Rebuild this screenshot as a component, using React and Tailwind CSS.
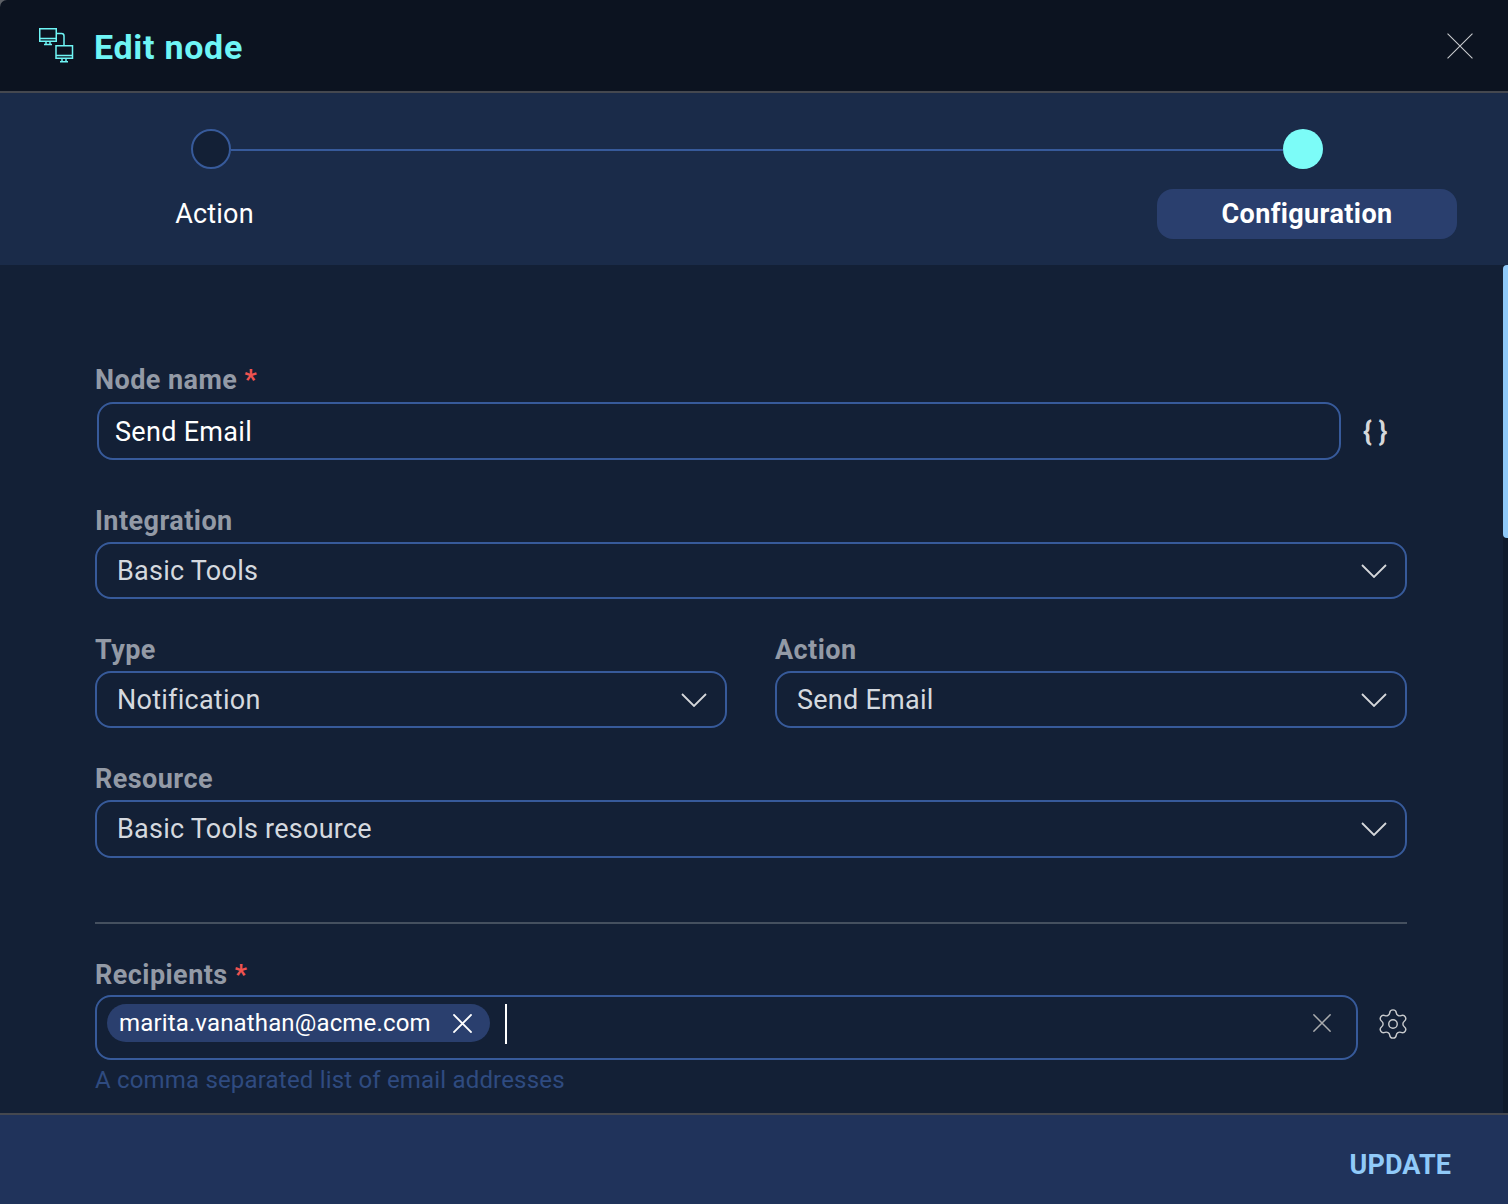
import React from 'react';
import { Settings } from 'lucide-react';

const CloseIcon = ({ className, strokeWidth = 1 }) => (
  <svg className={className} viewBox="0 0 24 24" fill="none" stroke="currentColor" strokeWidth={strokeWidth}>
    <path d="M0.5 0.5 L23.5 23.5 M23.5 0.5 L0.5 23.5" />
  </svg>
);

const ChevronIcon = () => (
  <svg className="h-[14px] w-[26px] text-[#d5d7da]" viewBox="0 0 26 14" fill="none" stroke="currentColor" strokeWidth="1.8">
    <path d="M1 1 L13 13 L25 1" />
  </svg>
);

// two monitors joined by a cable
const NodesIcon = () => (
  <svg className="h-[35px] w-[35px] text-[#6ff5f5]" viewBox="0 0 35 35" fill="none" stroke="currentColor" strokeWidth="1.5">
    <rect x="0.75" y="0.75" width="16.5" height="12.5" />
    <path d="M0.75 10.5 H17.25 M7 13 V16 M11 13 V16 M5 16.5 H13" />
    <rect x="17" y="17.75" width="16.5" height="12.5" />
    <path d="M17 27.5 H33.5 M23 30 V33.5 M27 30 V33.5 M21 33.75 H29" />
    <path d="M17.5 5.5 H22.5 Q25 5.5 25 8 V17.5" />
  </svg>
);

const Label = ({ children, required, className = 'mb-[6px]' }) => (
  <div className={`h-[30px] text-[27px] leading-[30px] font-bold tracking-[0.45px] text-[#939aa6] ${className}`}>
    {children}
    {required && <span className="ml-[7px] text-[#ef5350]">*</span>}
  </div>
);

const SelectBox = ({ value, height = 'h-[57px]' }) => (
  <div className={`flex ${height} items-center justify-between rounded-[16px] border-2 border-[#375a9a] pl-[20px] pr-[18px]`}>
    <span className="text-[27px] leading-[30px] tracking-[0.25px] text-[#d5d9df]">{value}</span>
    <ChevronIcon />
  </div>
);

export default function App() {
  return (
    <div className="flex h-[1204px] w-[1508px] flex-col overflow-hidden bg-[#5d6066] font-['Roboto',sans-serif]">
      {/* Header */}
      <header className="flex h-[93px] shrink-0 items-center justify-between rounded-tl-[7px] border-b-2 border-[#45484f] bg-[#0c1320] pl-[39px] pr-[35px]">
        <div className="flex items-center gap-[20px]">
          <NodesIcon />
          <h1 className="mt-[3px] text-[34px] font-bold tracking-[0.7px] text-[#6ff5f5]">Edit node</h1>
        </div>
        <CloseIcon className="h-[26px] w-[26px] text-[#c9cbce]" />
      </header>

      {/* Stepper */}
      <section className="h-[172px] shrink-0 bg-[#1a2b49] pt-[36px]">
        <div className="flex items-center pl-[191px] pr-[185px]">
          <div className="h-[40px] w-[40px] rounded-full border-2 border-[#375a9a] bg-[#132036]" />
          <div className="mt-[2px] h-[2px] flex-1 bg-[#375a9a]" />
          <div className="h-[40px] w-[40px] rounded-full bg-[#7cfcf8]" />
        </div>
        <div className="mt-[20px] flex justify-between pl-[64px] pr-[51px]">
          <div className="flex h-[50px] w-[300px] items-center justify-center pl-[1px] text-[27px] leading-[30px] tracking-[0.2px] text-white">Action</div>
          <div className="flex h-[50px] w-[300px] items-center justify-center rounded-[16px] bg-[#2a3f6e] text-[27px] leading-[30px] font-bold tracking-[0.4px] text-white">Configuration</div>
        </div>
      </section>

      {/* Form */}
      <main className="relative min-h-0 flex-1 overflow-hidden bg-[#132036] pl-[95px] pr-[101px] pt-[100px]">
        <div className="absolute right-0 top-0 h-full w-[5px] bg-[#0f1a2c]">
          <div className="h-[273px] w-[5px] rounded-l-[4px] bg-[#90caf9]" />
        </div>

        <Label required className="mb-[7px]">Node name</Label>
        <div className="flex items-center">
          <div className="ml-[2px] flex h-[58px] w-[1244px] shrink-0 items-center rounded-[16px] border-2 border-[#375a9a] pl-[16px] text-[27px] leading-[30px] tracking-[0.3px] text-white">
            <span className="mt-[2px]">Send Email</span>
          </div>
          <span className="ml-[22px] mt-[2px] text-[27px] font-bold text-[#d5d7da]">{'{ }'}</span>
        </div>

        <Label className="mb-[6px] mt-[46px]">Integration</Label>
        <SelectBox value="Basic Tools" />

        <div className="mt-[36px] grid grid-cols-2 gap-x-[48px]">
          <div>
            <Label>Type</Label>
            <SelectBox value="Notification" />
          </div>
          <div>
            <Label>Action</Label>
            <SelectBox value="Send Email" />
          </div>
        </div>

        <Label className="mb-[6px] mt-[36px]">Resource</Label>
        <SelectBox value="Basic Tools resource" height="h-[58px]" />

        <div className="mt-[64px] h-[2px] bg-[#45505f]" />

        <Label required className="mb-[5px] mt-[36px]">Recipients</Label>
        <div className="flex items-center">
          <div className="flex h-[65px] w-[1263px] shrink-0 items-center rounded-[16px] border-2 border-[#375a9a] pb-[9px] pl-[10px] pr-[25px]">
            <div className="flex h-[38px] w-[383px] items-center rounded-full bg-[#2a3f6e] pl-[12px] pr-[18px]">
              <span className="flex-1 text-[24px] tracking-[0.15px] text-white">marita.vanathan@acme.com</span>
              <CloseIcon className="h-[19px] w-[19px] text-white" strokeWidth={2.4} />
            </div>
            <div className="ml-[15px] mt-[2px] h-[40px] w-[2px] bg-white" />
            <CloseIcon className="ml-auto h-[18px] w-[18px] text-[#a9abae]" strokeWidth={2} />
          </div>
          <Settings className="mb-[8px] ml-[18px] h-[34px] w-[34px] shrink-0 text-[#c9cbce]" strokeWidth={1} />
        </div>
        <div className="mt-[6px] text-[24px] leading-[28px] tracking-[0.18px] text-[#2f4b80]">A comma separated list of email addresses</div>
      </main>

      {/* Footer */}
      <footer className="flex h-[91px] shrink-0 items-center justify-end border-t-2 border-[#45484f] bg-[#20335b] pr-[57px] pt-[11px]">
        <button className="text-[27px] font-bold tracking-[0.1px] text-[#90caf9]">UPDATE</button>
      </footer>
    </div>
  );
}
